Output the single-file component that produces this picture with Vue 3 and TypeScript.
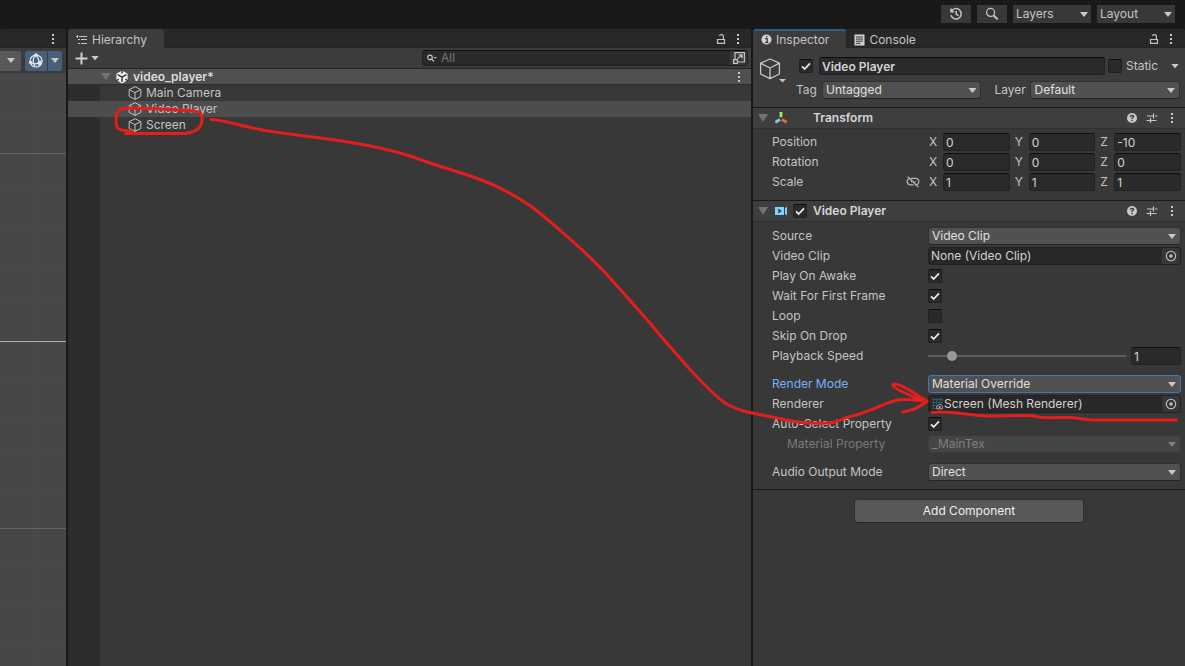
<script setup lang="ts">
import { ref } from 'vue'

interface Axis { name: string; value: string }
interface VectorRow { label: string; linked?: boolean; axes: Axis[] }

const vec = (x: string, y: string, z: string): Axis[] => [
  { name: 'X', value: x },
  { name: 'Y', value: y },
  { name: 'Z', value: z },
]

const vectors = ref<VectorRow[]>([
  { label: 'Position', axes: vec('0', '0', '-10') },
  { label: 'Rotation', axes: vec('0', '0', '0') },
  { label: 'Scale', linked: true, axes: vec('1', '1', '1') },
])

const toggles = ref([
  { id: 'awake', label: 'Play On Awake', on: true },
  { id: 'wait', label: 'Wait For First Frame', on: true },
  { id: 'loop', label: 'Loop', on: false },
  { id: 'skip', label: 'Skip On Drop', on: true },
])

const objects = ['Main Camera', 'Video Player', 'Screen']
const selected = ref('Video Player')

const active = ref(true)
const isStatic = ref(false)
const enabled = ref(true)
const autoSelect = ref(true)
const objectName = ref('Video Player')
const speed = ref(1)
const filter = ref('')

const gridLines = Array.from({ length: 16 }, (_, i) => {
  const n = i - 7
  return { y: Math.floor(268 + n * 37.5) + 0.5, kind: n === 0 ? 'axis' : n % 5 === 0 ? 'major' : 'minor' }
})
</script>

<template>
  <div class="editor">
    <header class="topbar">
      <button class="tool" aria-label="Undo history">
        <svg width="14" height="14" viewBox="0 0 14 14" fill="none" stroke="#c8c8c8" stroke-width="1.5">
          <path d="M2.6 4A5.2 5.2 0 1 1 2 8.3M2 1.5V4.7H5.2M7.3 4V7.3L9.6 8.7" />
        </svg>
      </button>
      <button class="tool" aria-label="Search">
        <svg width="14" height="14" viewBox="0 0 14 14" fill="none" stroke="#c8c8c8">
          <circle cx="5.6" cy="5.4" r="4" stroke-width="1.2" />
          <path d="M8.6 8.4L12.6 12.4" stroke-width="2" />
        </svg>
      </button>
      <div class="drop dark">
        <select aria-label="Layers"><option>Layers</option></select>
        <i class="caret"></i>
      </div>
      <div class="drop dark">
        <select aria-label="Layout"><option>Layout</option></select>
        <i class="caret"></i>
      </div>
    </header>

    <main class="panels">
      <section class="panel scene">
        <div class="tabs"><span class="grow"></span><button class="dots" aria-label="Scene menu"></button></div>
        <div class="scene-tools">
          <button class="draw-mode" aria-label="Draw mode"><i class="caret"></i></button>
          <button class="gizmo" aria-label="Gizmos">
            <svg width="16" height="16" viewBox="0 0 16 16" fill="none" stroke="#e6e6e6" stroke-width="1.2">
              <circle cx="8" cy="8" r="6" />
              <path d="M8 2C4.5 5 4.5 9 7 13.5M8 2C10.5 5 11.6 8 11 12.5M2.5 9.5C6 11.5 10 11.5 14 7.5" />
              <g fill="#e6e6e6" stroke="none"><circle cx="8" cy="2" r="1.8" /><circle cx="2.6" cy="9.4" r="1.7" /><circle cx="11.3" cy="10.3" r="1.7" /></g>
            </svg>
          </button>
          <button class="gizmo-menu" aria-label="Gizmo options"><i class="caret"></i></button>
        </div>
        <div class="viewport">
          <svg width="100%" height="100%">
            <line x1="33.5" x2="33.5" y1="0" y2="100%" class="minor" />
            <line v-for="l in gridLines" :key="l.y" x1="0" x2="100%" :y1="l.y" :y2="l.y" :class="l.kind" />
          </svg>
        </div>
      </section>

      <section class="panel hierarchy">
        <div class="tabs">
          <button class="tab on">
            <svg width="12" height="12" viewBox="0 0 12 12" stroke="#c4c4c4" fill="none">
              <path d="M0 2.5H2M3 2.5H11M2 5.5H4M5 5.5H11M2 9.5H4M5 9.5H11M1.5 1V4" />
            </svg>
            Hierarchy
          </button>
          <span class="grow"></span>
          <svg class="lock" width="10" height="12" viewBox="0 0 10 12" fill="none" stroke="#c4c4c4" stroke-width="1.2"><path d="M1.5 6.5H8.5V10.4H1.5ZM7.4 6.5V3.2Q7.4 1.6 5.4 1.6Q3.6 1.6 3.5 2.9" /></svg>
          <button class="dots" aria-label="Hierarchy menu"></button>
        </div>
        <div class="htools">
          <button class="add" aria-label="Create">
            <svg width="13" height="13" viewBox="0 0 13 13"><path d="M6.5 .5V12.5M.5 6.5H12.5" stroke="#d0d0d0" stroke-width="2" /></svg>
            <i class="caret"></i>
          </button>
          <div class="search">
            <svg width="10" height="9" viewBox="0 0 10 9" fill="none" stroke="#c4c4c4"><circle cx="3" cy="3.4" r="2.3" stroke-width="1.2" /><path d="M4.7 5.1L7 7.6" stroke-width="1.3" /><path d="M6.3 3H9.7L8 4.8Z" fill="#c4c4c4" stroke="none" /></svg>
            <input v-model="filter" type="text" placeholder="All" aria-label="Filter hierarchy" />
            <button aria-label="Open in search window">
              <svg width="14" height="14" viewBox="0 0 14 14" fill="none" stroke="#c4c4c4" stroke-width="1.2"><path d="M3 8V1.6H12.4V11H6M1.6 8.6H5.4V12.4H1.6ZM5.6 7.6L10 4M6.6 3.9H10.1V7.4" /></svg>
            </button>
          </div>
        </div>
        <div class="scene-row">
          <i class="fold"></i>
          <svg width="14" height="14" viewBox="0 0 14 14">
            <path d="M7 .6L12.6 3.7V10.3L7 13.4L1.4 10.3V3.7Z" fill="#f0f0f0" />
            <path d="M7 7.2V12M7 7.2L2.6 4.7M7 7.2L11.4 4.7M7 0V3.4M1 11L3.7 9.2M13 11L10.3 9.2" stroke="#3c3c3c" stroke-width="1.5" />
          </svg>
          <strong>video_player*</strong>
          <span class="grow"></span>
          <button class="dots" aria-label="Scene options"></button>
        </div>
        <ul class="tree">
          <li v-for="o in objects" :key="o" :class="{ sel: o === selected }" @click="selected = o">
            <svg width="14" height="14" viewBox="0 0 14 14" fill="none" stroke="#c4c4c4" stroke-linejoin="round"><path d="M7 .7L12.8 3.6V10.4L7 13.4L1.2 10.4V3.6ZM1.2 3.6L7 6.6L12.8 3.6M7 6.6V13.4" /></svg>
            <span>{{ o }}</span>
          </li>
        </ul>
      </section>

      <section class="panel inspector">
        <div class="tabs">
          <button class="tab on focus">
            <svg width="11" height="11" viewBox="0 0 11 11"><circle cx="5.5" cy="5.5" r="5" fill="#d2d2d2" /><path d="M4 4.6H6.2V8M4 8.3H7.4M5.1 2.6H6.4" stroke="#333" stroke-width="1.2" fill="none" /></svg>
            Inspector
          </button>
          <button class="tab">
            <svg width="11" height="12" viewBox="0 0 11 12"><rect x=".5" y=".5" width="10" height="11" fill="#d2d2d2" /><path d="M2 3H9M2 5.1H9M2 7.2H9M2 9.3H6.5" stroke="#333" /></svg>
            Console
          </button>
          <span class="grow"></span>
          <svg class="lock" width="10" height="12" viewBox="0 0 10 12" fill="none" stroke="#c4c4c4" stroke-width="1.2"><path d="M1.5 6.5H8.5V10.4H1.5ZM7.4 6.5V3.2Q7.4 1.6 5.4 1.6Q3.6 1.6 3.5 2.9" /></svg>
          <button class="dots" aria-label="Inspector menu"></button>
        </div>

        <div class="object-head">
          <button class="object-icon" aria-label="Select icon">
            <svg width="28" height="28" viewBox="0 0 28 28" fill="none" stroke="#c4c4c4" stroke-width="1.3" stroke-linejoin="round"><path d="M11 3L20.4 7.2V18L11 22.6L1.6 18V7.2ZM1.6 7.2L11 12L20.4 7.2M11 12V22.6" /><path d="M20 23H27L23.5 26.5Z" fill="#c4c4c4" stroke="none" /></svg>
          </button>
          <div class="object-fields">
            <div class="line name-line">
              <span class="check">
                <input v-model="active" type="checkbox" aria-label="Active" />
                <svg v-if="active" width="14" height="14" viewBox="0 0 14 14"><path d="M3 7.4L5.6 10L11 4.3" /></svg>
              </span>
              <input v-model="objectName" class="field name" type="text" aria-label="Name" />
              <span class="check">
                <input id="static" v-model="isStatic" type="checkbox" />
                <svg v-if="isStatic" width="14" height="14" viewBox="0 0 14 14"><path d="M3 7.4L5.6 10L11 4.3" /></svg>
              </span>
              <label for="static" class="static">Static</label>
              <button class="plain" aria-label="Static flags"><i class="caret"></i></button>
            </div>
            <div class="line tag-line">
              <label for="tag">Tag</label>
              <div class="drop tag"><select id="tag"><option>Untagged</option></select><i class="caret"></i></div>
              <label for="layer" class="layer-label">Layer</label>
              <div class="drop layer"><select id="layer"><option>Default</option></select><i class="caret"></i></div>
            </div>
          </div>
        </div>

        <div class="comp-head">
          <i class="fold"></i>
          <svg width="14" height="14" viewBox="0 0 14 14" fill="none" stroke-width="2.8"><path d="M6 1V6.2" stroke="#a4ee4c" /><path d="M5 8.6L.3 11.2" stroke="#7ccbf2" /><path d="M7 8.6L11.7 11.2" stroke="#f4683c" /></svg>
          <span class="slot"></span>
          <h2>Transform</h2>
          <span class="grow"></span>
          <button class="plain" aria-label="Transform help"><svg width="10" height="10" viewBox="0 0 10 10"><circle cx="5" cy="5" r="5" fill="#c8c8c8" /><path d="M3.3 3.8Q3.4 2.3 5 2.3Q6.7 2.4 6.6 3.7Q6.4 4.6 5 5.1V6.2M5 7V8.2" fill="none" stroke="#333" stroke-width="1.3" /></svg></button>
          <button class="plain" aria-label="Transform presets"><svg width="12" height="10" viewBox="0 0 12 10"><path d="M1 3H7.5M9 3H11.5M7.5 .5V5.5M.5 7.5H4M5 7.5H10.5M4.5 5V10" stroke="#c8c8c8" stroke-width="1.2" /></svg></button>
          <button class="dots" aria-label="Transform menu"></button>
        </div>
        <div class="props transform">
          <div v-for="v in vectors" :key="v.label" class="row">
            <span class="label">{{ v.label }}
              <svg v-if="v.linked" class="link" width="14" height="12" viewBox="0 0 14 12" fill="none" stroke="#b8b8b8" stroke-width="1.2"><path d="M5 2.4H9.6A3.2 3.2 0 0 1 9.6 8.8H9M7.5 8.8H4.2A3.2 3.2 0 0 1 3 2.7M5 5.6H6.2M8.6 5.6H9.6M1.8 .8L12.4 11" /></svg>
            </span>
            <div class="axes">
              <label v-for="a in v.axes" :key="a.name"><span>{{ a.name }}</span><input v-model="a.value" class="field" type="text" /></label>
            </div>
          </div>
        </div>

        <div class="comp-head">
          <i class="fold"></i>
          <svg width="14" height="14" viewBox="0 0 14 14"><path d="M0 3H9V11H0Z" fill="#7fd3fa" /><path d="M12 2.6V11.4L10 9.8V4.2Z" fill="#7fd3fa" /><path d="M3.3 4.6L6.8 7L3.3 9.4Z" fill="#2d3c46" /></svg>
          <span class="slot">
            <span class="check">
              <input v-model="enabled" type="checkbox" aria-label="Enable Video Player" />
              <svg v-if="enabled" width="14" height="14" viewBox="0 0 14 14"><path d="M3 7.4L5.6 10L11 4.3" /></svg>
            </span>
          </span>
          <h2>Video Player</h2>
          <span class="grow"></span>
          <button class="plain" aria-label="Video Player help"><svg width="10" height="10" viewBox="0 0 10 10"><circle cx="5" cy="5" r="5" fill="#c8c8c8" /><path d="M3.3 3.8Q3.4 2.3 5 2.3Q6.7 2.4 6.6 3.7Q6.4 4.6 5 5.1V6.2M5 7V8.2" fill="none" stroke="#333" stroke-width="1.3" /></svg></button>
          <button class="plain" aria-label="Video Player presets"><svg width="12" height="10" viewBox="0 0 12 10"><path d="M1 3H7.5M9 3H11.5M7.5 .5V5.5M.5 7.5H4M5 7.5H10.5M4.5 5V10" stroke="#c8c8c8" stroke-width="1.2" /></svg></button>
          <button class="dots" aria-label="Video Player menu"></button>
        </div>
        <div class="props video">
          <div class="row">
            <label class="label" for="source">Source</label>
            <div class="drop"><select id="source"><option>Video Clip</option></select><i class="caret"></i></div>
          </div>
          <div class="row">
            <label class="label" for="clip">Video Clip</label>
            <div class="object-field">
              <input id="clip" type="text" value="None (Video Clip)" readonly />
              <button aria-label="Pick video clip"><svg width="12" height="12" viewBox="0 0 12 12"><circle cx="6" cy="6" r="4.7" fill="none" stroke="#c4c4c4" stroke-width="1.1" /><circle cx="6" cy="6" r="1.7" fill="#c4c4c4" /></svg></button>
            </div>
          </div>
          <div v-for="t in toggles" :key="t.id" class="row">
            <label class="label" :for="t.id">{{ t.label }}</label>
            <span class="check">
              <input :id="t.id" v-model="t.on" type="checkbox" />
              <svg v-if="t.on" width="14" height="14" viewBox="0 0 14 14"><path d="M3 7.4L5.6 10L11 4.3" /></svg>
            </span>
          </div>
          <div class="row">
            <label class="label" for="speed">Playback Speed</label>
            <div class="slider">
              <input id="speed" v-model.number="speed" type="range" min="0" max="10" step="0.1" />
              <input v-model="speed" class="field" type="text" aria-label="Playback speed value" />
            </div>
          </div>
          <div class="row group focused">
            <label class="label" for="mode">Render Mode</label>
            <div class="drop"><select id="mode"><option>Material Override</option></select><i class="caret"></i></div>
          </div>
          <div class="row">
            <label class="label" for="renderer">Renderer</label>
            <div class="object-field">
              <svg class="mesh" width="11" height="12" viewBox="0 0 11 12" fill="none"><path d="M0 1.5H10M0 4.5H10M0 7.5H5M0 10.5H4M1.5 0V11M4.5 0V11M7.5 0V6M10 0V6" stroke="#315664" /><path d="M4.8 8.2Q7.8 5 10.6 8.2V10.8H4.8Z" fill="#282828" stroke="#aaa" /><circle cx="7.7" cy="9" r="1" fill="#bbb" /></svg>
              <input id="renderer" type="text" value="Screen (Mesh Renderer)" readonly />
              <button aria-label="Pick renderer"><svg width="12" height="12" viewBox="0 0 12 12"><circle cx="6" cy="6" r="4.7" fill="none" stroke="#c4c4c4" stroke-width="1.1" /><circle cx="6" cy="6" r="1.7" fill="#c4c4c4" /></svg></button>
            </div>
          </div>
          <div class="row">
            <label class="label" for="auto">Auto-Select Property</label>
            <span class="check">
              <input id="auto" v-model="autoSelect" type="checkbox" />
              <svg v-if="autoSelect" width="14" height="14" viewBox="0 0 14 14"><path d="M3 7.4L5.6 10L11 4.3" /></svg>
            </span>
          </div>
          <div class="row disabled">
            <label class="label indent" for="matprop">Material Property</label>
            <div class="drop"><select id="matprop" disabled><option>_MainTex</option></select><i class="caret"></i></div>
          </div>
          <div class="row group">
            <label class="label" for="audio">Audio Output Mode</label>
            <div class="drop"><select id="audio"><option>Direct</option></select><i class="caret"></i></div>
          </div>
        </div>
        <div class="add-wrap"><button class="add-component">Add Component</button></div>
      </section>
    </main>

    <svg class="ink" viewBox="0 0 1185 666" preserveAspectRatio="none" aria-hidden="true">
      <path d="M125.500 133.600H180C194 133.500 201 129 202 121C203 113 200 111.400 190 110.800L157 108.800L129 108C119 108 117 111 116.500 116C115.400 125 116 129 122 130.200L131 131" />
      <path d="M211 119.500C221 119.500 237 125 260 129.500C300 137 350 139 400 153C414 157 424 161 436 165C455 171 472 176 489 183C505 190 519 198 532 207C548 219 563 233 579 247C593 260 606 273 618 287C629 299 639 311 650 323C661 337 674 351 686 365C699 379 711 393 725 403C733 408 742 411 752 413C762 415 772 417 782 419C795 422 814 424 828 423C838 423 840 419 850 416.500C868 413 884 403 897 400C907 398 918 401 927 401C917 396 905 385 895 384C890 384 894 388 903 392C911 396 920 400 927 401.500C921 406 912 411 903 412" />
      <path d="M932 412.500C944 411 956 413 967 414C975 415 981 416 988 416C1003 416 1018 415 1032 415.700C1036 416 1039 417.500 1043 417.500C1053 418 1063 417 1072 417.500C1080 418 1086 420 1095 420H1176" />
    </svg>
  </div>
</template>

<style>
body { margin: 0; background: #191919; }
</style>

<style scoped>
* { box-sizing: border-box; }
.editor {
  position: relative;
  min-height: 100vh;
  display: flex;
  flex-direction: column;
  background: #191919;
  color: #c4c4c4;
  font: 12px/16px Inter, "Liberation Sans", sans-serif;
}
button, input, select { font: inherit; color: inherit; margin: 0; }
button { border: 0; padding: 0; background: none; display: flex; align-items: center; }
svg { flex: none; display: block; }
.grow { flex: 1; }
.topbar { height: 29px; display: flex; justify-content: flex-end; align-items: flex-start; gap: 6px; padding: 5px 10px 0 0; }
.tool { width: 30px; height: 18px; justify-content: center; background: #383838; }
.caret { flex: none; width: 8px; height: 5px; background: #c8c8c8; clip-path: polygon(0 0, 100% 0, 50% 100%); }
.fold { flex: none; width: 10px; height: 8px; background: #727272; clip-path: polygon(0 0, 100% 0, 50% 100%); }

.drop { position: relative; flex: 1; min-width: 0; height: 18px; }
.drop select {
  appearance: none; display: block; width: 100%; height: 18px; padding: 0 16px 0 3px;
  background: #515151; border: 1px solid #303030; border-bottom-color: #242424; border-radius: 3px;
  color: #e0e0e0; line-height: 16px; outline: 0;
}
.drop .caret { position: absolute; right: 5px; top: 7px; pointer-events: none; }
.drop.dark { flex: none; width: 78px; }
.drop.dark select { background: #383838; border: 0; border-radius: 0; color: #c4c4c4; line-height: 18px; }
.drop.dark .caret { right: 3px; }

.panels { flex: 1; display: grid; grid-template-columns: 66px minmax(0, 1fr) 432px; gap: 2px; }
.panel { display: flex; flex-direction: column; background: #383838; min-width: 0; border-radius: 3px 3px 0 0; overflow: hidden; }
.tabs { height: 19px; flex: none; display: flex; align-items: center; background: #282828; box-shadow: inset 0 -1px #232323; padding-right: 8px; }
.inspector .tabs { padding-right: 9px; }
.tab { height: 19px; gap: 4px; padding: 2px 9px 0 8px; white-space: nowrap; }
.tab.on { background: #3c3c3c; border-radius: 3px 3px 0 0; padding-right: 17px; }
.tab.focus { border-top: 2px solid #2c5d87; padding-top: 0; }
.lock { margin-right: 7px; }
.dots { flex: none; width: 10px; height: 11px; justify-content: center; }
.dots::before { content: ""; width: 2px; height: 10px; background: repeating-linear-gradient(#c8c8c8 0 2px, transparent 2px 4px); }

.scene-tools { height: 25px; flex: none; display: flex; align-items: center; background: #3c3c3c; }
.draw-mode { width: 21px; height: 20px; padding-left: 7px; background: #585858; border-radius: 0 2px 2px 0; margin-right: 4px; }
.gizmo { width: 22px; height: 20px; justify-content: center; background: #46607c; border-radius: 2px 0 0 2px; margin-right: 1px; }
.gizmo-menu { width: 14px; height: 20px; justify-content: center; background: #46607c; border-radius: 0 2px 2px 0; }
.viewport { flex: 1; position: relative; background: #474747; }
.viewport svg { position: absolute; inset: 0; }
.minor { stroke: #4b4b4b; }
.major { stroke: #646464; }
.axis { stroke: #b0b0b0; }

.htools { height: 21px; flex: none; display: flex; align-items: center; justify-content: space-between; background: #3c3c3c; border-bottom: 1px solid #232323; padding: 0 3px 0 7px; }
.add { gap: 3px; }
.search { width: 326px; height: 16px; display: flex; align-items: center; background: #2a2a2a; border: 1px solid #212121; border-top-color: #101010; border-radius: 4px; padding-left: 4px; overflow: hidden; }
.search input { flex: 1; min-width: 0; height: 14px; border: 0; outline: 0; background: none; padding: 0 0 0 4px; }
.search input::placeholder { color: #757575; opacity: 1; }
.search button { width: 17px; height: 14px; justify-content: center; background: #383838; }
.scene-row { height: 16px; flex: none; display: flex; align-items: center; background: #505050; border-bottom: 1px solid #2c2c2c; padding: 0 7px 0 33px; color: #dcdcdc; }
.scene-row svg { margin: 0 4px; }
.scene-row strong { font-weight: 600; }
.tree { flex: 1; margin: 0; padding: 0; list-style: none; background: linear-gradient(90deg, #2d2d2d 32px, #383838 32px); }
.tree li { height: 16px; display: flex; align-items: center; gap: 4px; padding-left: 60px; }
.tree li.sel { background: #4d4d4d; }

.object-head { display: flex; height: 59px; background: #3c3c3c; padding: 8px 5px 0 6px; }
.object-icon { width: 28px; height: 28px; margin-right: 9px; }
.object-fields { flex: 1; min-width: 0; }
.line { display: flex; align-items: center; height: 20px; }
.name-line { margin-bottom: 5px; padding: 0 1px 0 3px; }
.name { flex: 1; margin: 0 3px 0 6px; font-weight: 600; }
.name-line .static { width: 49px; padding-left: 4px; }
.plain { flex: none; justify-content: center; }
.tag-line { height: 18px; }
.tag-line label { flex: none; width: 26px; }
.tag-line .layer-label { width: 36px; margin-left: 13px; }
.drop.tag { flex: 160 1 0; }
.drop.layer { flex: 150 1 0; }
.field {
  height: 18px; min-width: 0; padding: 0 2px; color: #d2d2d2; background: #2a2a2a;
  border: 1px solid #212121; border-top-color: #0d0d0d; border-radius: 3px; outline: 0;
}
.check { position: relative; flex: none; display: block; width: 14px; height: 14px; }
.check input { appearance: none; display: block; width: 14px; height: 14px; background: #2a2a2a; border: 1px solid #212121; border-top-color: #0d0d0d; border-radius: 2px; }
.check svg { position: absolute; inset: 0; pointer-events: none; fill: none; stroke: #e8e8e8; stroke-width: 1.8; }

.comp-head { height: 22px; flex: none; display: flex; align-items: center; background: #3e3e3e; border-top: 1px solid #1a1a1a; border-bottom: 1px solid #303030; padding: 0 8px 0 5px; }
.comp-head > svg { margin-left: 7px; }
.comp-head .slot { width: 24px; padding-left: 4px; }
.comp-head h2 { margin: 0; font: inherit; font-weight: 600; color: #d6d6d6; }
.comp-head .plain { width: 20px; height: 20px; }
.comp-head .dots { margin-left: 5px; }

.props { display: flex; flex-direction: column; gap: 2px; padding: 5px 4px 9px 19px; }
.row { display: flex; align-items: center; height: 18px; }
.row.group { margin-top: 8px; }
.label { flex: none; width: 156px; position: relative; display: flex; align-items: center; }
.label.indent { padding-left: 15px; }
.link { margin-left: auto; margin-right: 8px; }
.axes { flex: 1; display: flex; gap: 5px; padding-left: 1px; }
.axes label { flex: 1; display: flex; align-items: center; min-width: 0; }
.axes span { flex: none; width: 14px; }
.axes .field { flex: 1; width: 0; }
.transform { padding-top: 4px; }
.object-field { flex: 1; height: 18px; display: flex; align-items: center; background: #282828; border: 1px solid #212121; border-radius: 3px; overflow: hidden; }
.object-field input { flex: 1; min-width: 0; height: 16px; padding: 0 2px; border: 0; outline: 0; background: none; color: #d2d2d2; }
.object-field .mesh { margin-left: 3px; }
.object-field .mesh + input { padding-left: 1px; }
.object-field button { width: 18px; height: 16px; justify-content: center; background: #373737; }
.slider { flex: 1; display: flex; align-items: center; gap: 5px; }
.slider input[type="range"] { appearance: none; flex: 1; min-width: 0; height: 18px; background: linear-gradient(#5e5e5e, #5e5e5e) center / 100% 2px no-repeat; }
.slider input[type="range"]::-webkit-slider-thumb { appearance: none; width: 10px; height: 10px; border-radius: 50%; background: #999; }
.slider .field { width: 50px; }
.focused .label { color: #7baefa; }
.focused select { border-color: #3a79bb; }
.disabled { color: #7a7a7a; }
.disabled select { background: #454545; color: #7f7f7f; border-color: #3a3a3a; opacity: 1; }
.disabled .caret { background: #808080; }
.video { padding-bottom: 8px; }
.add-wrap { border-top: 1px solid #1a1a1a; padding-top: 9px; display: flex; justify-content: center; }
.add-component { width: 230px; height: 24px; justify-content: center; background: #585858; border: 1px solid #303030; border-bottom-color: #242424; border-radius: 3px; color: #eee; }

.ink { position: absolute; inset: 0; width: 100%; height: 100%; pointer-events: none; fill: none; stroke: #e41d1d; stroke-width: 3; stroke-linecap: round; stroke-linejoin: round; }
</style>
